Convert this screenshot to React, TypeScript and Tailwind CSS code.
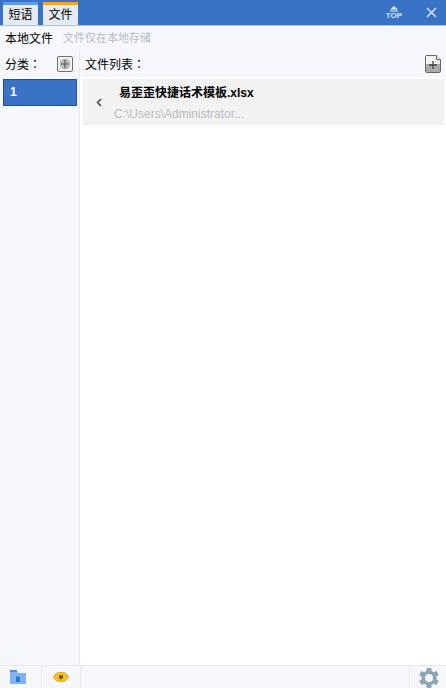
import React from "react";

const font = { fontFamily: '"Liberation Sans", "Noto Sans CJK SC", sans-serif' };
const colonFont = { fontFamily: '"Noto Sans CJK TC", sans-serif' };

function AddIcon() {
  return (
    <svg width="16" height="16" viewBox="0 0 16 16">
      <rect x="0.5" y="0.5" width="15" height="15" rx="1.5" fill="#f4f4f4" stroke="#6f6f6f" />
      <circle cx="8" cy="8" r="5.5" fill="#bdbdbd" />
      <path d="M8 4v8M4 8h8" stroke="#555" strokeWidth="1.2" />
    </svg>
  );
}

function NewFileIcon() {
  return (
    <svg width="16" height="18" viewBox="0 0 16 18">
      <path d="M1.5.5h10l4 4v12a1 1 0 0 1-1 1h-13a1 1 0 0 1-1-1v-15a1 1 0 0 1 1-1z" fill="#f2f2f2" stroke="#666" />
      <path d="M1 9h14v8H1z" fill="#a9a9a9" />
      <path d="M11.5.5v4h4" fill="#fff" stroke="#666" />
      <path d="M8 6v8M4 10h8" stroke="#444" strokeWidth="1.3" />
    </svg>
  );
}

function TopIcon() {
  return (
    <div className="flex flex-col items-center w-[16px]">
      <svg width="10" height="6" viewBox="0 0 10 6">
        <path d="M5 0l4 3.5H1z" fill="#e8eef8" />
        <path d="M1 4.5h8v1H1z" fill="#e8eef8" />
      </svg>
      <span className="text-[8px] leading-[8px] font-bold text-[#dbe6f6]">TOP</span>
    </div>
  );
}

function CloseIcon() {
  return (
    <svg width="11" height="11" viewBox="0 0 11 11">
      <path d="M1 1l9 9M10 1l-9 9" stroke="#eef3fb" strokeWidth="1.2" />
    </svg>
  );
}

function FolderIcon() {
  return (
    <svg width="16" height="14" viewBox="0 0 16 14">
      <path d="M0 1h7l1 2h8v11H0z" fill="#82b4f5" />
      <path d="M0 0h7v2H0z" fill="#4a8fe0" />
      <path d="M6 7l2-1 2 1v5H6z" fill="#2f78d2" />
    </svg>
  );
}

function EyeIcon() {
  return (
    <svg width="16" height="10" viewBox="0 0 16 10">
      <path d="M0 5C3 .6 6 0 8 0s5 .6 8 5c-3 4.400-6 5-8 5s-5-.6-8-5z" fill="#f2c21f" stroke="#b9932a" strokeWidth=".6" />
      <circle cx="8" cy="5" r="2.200" fill="#7a5a3a" />
    </svg>
  );
}

function GearIcon() {
  return (
    <svg width="20" height="20" viewBox="0 0 20 20">
      <circle cx="10" cy="10" r="5.800" fill="none" stroke="#8ea4b2" strokeWidth="3.600" />
      {[0, 60, 120, 180, 240, 300].map((a) => (
        <rect key={a} x="7.500" y="0" width="5" height="4" rx="0.800" fill="#8ea4b2" transform={`rotate(${a} 10 10)`} />
      ))}
    </svg>
  );
}

export default function App() {
  return (
    <div className="w-[446px] h-[688px] flex flex-col bg-white text-black overflow-hidden" style={font}>
      <div className="h-[26px] shrink-0 flex items-end bg-[#3873c6] border-b border-[#a9c4e8] pl-[3px]">
        <div className="w-[35px] h-[23px] bg-[#e6ebf2] border-t-[3px] border-[#5f9ce8] text-[12px] leading-[20px] text-center">
          短语
        </div>
        <div className="w-[35px] h-[23px] ml-[5px] bg-[#e6ebf2] border-t-[3px] border-[#f5a623] text-[12px] leading-[20px] text-center">
          文件
        </div>
        <div className="ml-auto self-center flex items-center gap-[24px] pr-[9px]">
          <TopIcon />
          <CloseIcon />
        </div>
      </div>

      <div className="h-[25px] shrink-0 flex items-center gap-[10px] bg-[#f5f7fb] pl-[5px]">
        <span className="text-[12px]">本地文件</span>
        <span className="text-[11px] text-[#b4bdca]">文件仅在本地存储</span>
      </div>

      <div className="flex-1 flex min-h-0">
        <div className="w-[80px] shrink-0 bg-[#f5f7fb] border-r border-[#e6e9ef] flex flex-col">
          <div className="h-[26px] flex items-center justify-between pl-[5px] pr-[6px] text-[12px]">
            <span>
              分类<span style={colonFont}>：</span>
            </span>
            <AddIcon />
          </div>
          <div className="mt-[2px] ml-[3px] w-[74px] h-[27px] bg-[#3873c6] border border-[#25528f] text-white text-[12px] font-bold leading-[25px] pl-[6px]">
            1
          </div>
        </div>

        <div className="flex-1 flex flex-col">
          <div className="h-[26px] flex items-center justify-between bg-[#f5f7fb] pl-[5px] pr-[5px] text-[12px]">
            <span>
              文件列表<span style={colonFont}>：</span>
            </span>
            <NewFileIcon />
          </div>
          <div className="mt-[2px] ml-[3px] mr-[2px] h-[46px] flex items-center bg-[#f2f2f2] border border-[#efefef]">
            <svg className="ml-[12px] mt-[1px]" width="6" height="9" viewBox="0 0 6 9">
              <path d="M5 1L1.500 4.500 5 8" fill="none" stroke="#444" strokeWidth="1.500" />
            </svg>
            <div className="ml-[12px] flex flex-col pt-[2px]">
              <span className="ml-[5px] text-[12px] leading-[18px] font-bold">易歪歪快捷话术模板.xlsx</span>
              <span className="mt-[4px] text-[12px] leading-[16px] text-[#b8bcc4]">C:\Users\Administrator...</span>
            </div>
          </div>
        </div>
      </div>

      <div className="h-[23px] shrink-0 flex bg-[#f5f7fb] border-t border-[#e6e9ef]">
        <div className="w-[42px] flex items-center justify-center border-r border-[#e6e9ef] pr-[6px]">
          <FolderIcon />
        </div>
        <div className="w-[39px] flex items-center justify-center border-r border-[#e6e9ef]">
          <EyeIcon />
        </div>
        <div className="flex-1" />
        <div className="w-[37px] flex items-center justify-center border-l border-[#e6e9ef] pl-[2px] pt-[2px]">
          <GearIcon />
        </div>
      </div>
    </div>
  );
}
